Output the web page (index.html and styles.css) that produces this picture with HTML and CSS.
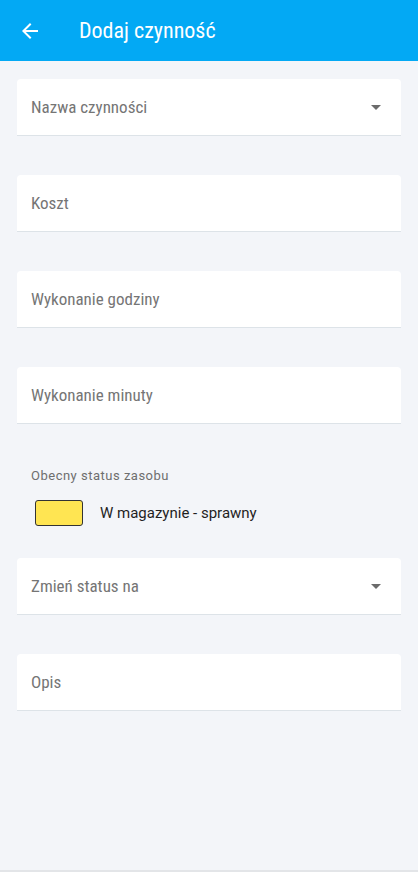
FILE: index.html
```html
<!DOCTYPE html>
<html lang="pl">
<head>
<meta charset="utf-8">
<title>Dodaj czynność</title>
<link rel="stylesheet" href="styles.css">
</head>
<body>
<div class="app">
  <header class="appbar">
    <button class="back" aria-label="Wstecz">
      <svg width="24" height="24" viewBox="0 0 24 24"><path d="M20 11H7.83l5.59-5.59L12 4l-8 8 8 8 1.41-1.41L7.83 13H20v-2z" fill="#fff"/></svg>
    </button>
    <h1 class="title">Dodaj czynność</h1>
  </header>
  <main class="content">
    <div class="field">
      <span class="label">Nazwa czynności</span>
      <span class="caret"></span>
    </div>
    <div class="field"><span class="label">Koszt</span></div>
    <div class="field"><span class="label">Wykonanie godziny</span></div>
    <div class="field"><span class="label">Wykonanie minuty</span></div>
    <section class="status">
      <div class="status-title">Obecny status zasobu</div>
      <div class="status-row">
        <span class="swatch"></span>
        <span class="status-name">W magazynie - sprawny</span>
      </div>
    </section>
    <div class="field">
      <span class="label">Zmień status na</span>
      <span class="caret"></span>
    </div>
    <div class="field"><span class="label">Opis</span></div>
  </main>
</div>
</body>
</html>
```
FILE: styles.css
```css
* { box-sizing: border-box; }
html, body { margin: 0; padding: 0; height: 100%; }
body {
  font-family: Roboto, "Noto Sans", sans-serif;
  background: #f3f5f9;
}
.app {
  height: 872px;
  display: flex;
  flex-direction: column;
  border-bottom: 2px solid #e3e5e8;
}
.appbar {
  height: 61px;
  background: #03a9f4;
  display: flex;
  align-items: center;
  padding-left: 18px;
  flex-shrink: 0;
}
.back {
  background: none;
  border: 0;
  padding: 0;
  width: 24px;
  height: 24px;
  display: flex;
  margin-right: 37px;
}
.title {
  margin: 0;
  color: #fff;
  font-family: "Roboto Condensed", "Liberation Sans Narrow", Roboto, sans-serif;
  font-stretch: condensed;
  font-size: 22px;
  font-weight: 400;
}
.content {
  padding: 18px 17px 0 17px;
  display: flex;
  flex-direction: column;
  gap: 39px;
}
.field {
  background: #fff;
  height: 57px;
  border-radius: 4px 4px 0 0;
  border-bottom: 1px solid #dde3e8;
  display: flex;
  align-items: center;
  justify-content: space-between;
  padding: 0 20px 0 14px;
}
.label {
  color: #757575;
  font-family: "Roboto Condensed", "Liberation Sans Narrow", Roboto, sans-serif;
  font-stretch: 78%;
  font-size: 17px;
}
.caret {
  width: 0;
  height: 0;
  border-left: 5px solid transparent;
  border-right: 5px solid transparent;
  border-top: 5px solid #6b6b6b;
}
.status {
  padding: 0 14px;
  margin-top: 5px;
  margin-bottom: -7px;
}
.status-title {
  font-size: 13px;
  color: #6e6e6e;
  letter-spacing: 0.5px;
  line-height: 16px;
}
.status-row {
  display: flex;
  align-items: center;
  margin-top: 16px;
  padding-left: 4px;
}
.swatch {
  width: 48px;
  height: 26px;
  background: #ffe552;
  border: 1px solid #333;
  border-radius: 3px;
  margin-right: 17px;
}
.status-name {
  font-size: 15px;
  color: #1f1f1f;
}
```
